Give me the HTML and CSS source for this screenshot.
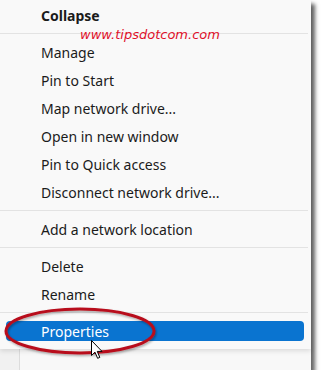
FILE: index.html
```html
<!DOCTYPE html>
<html>
<head>
<meta charset="utf-8">
<link rel="stylesheet" href="styles.css">
</head>
<body>
<div class="shot">
  <div class="menu">
    <div class="item bold">Collapse</div>
    <div class="sep"></div>
    <div class="item">Manage</div>
    <div class="item">Pin to Start</div>
    <div class="item">Map network drive...</div>
    <div class="item">Open in new window</div>
    <div class="item">Pin to Quick access</div>
    <div class="item">Disconnect network drive...</div>
    <div class="sep"></div>
    <div class="item">Add a network location</div>
    <div class="sep"></div>
    <div class="item">Delete</div>
    <div class="item">Rename</div>
    <div class="sep"></div>
    <div class="item sel">Properties</div>
  </div>
  <div class="below">
    <div class="below-left"></div>
    <div class="below-right"></div>
  </div>
  <div class="watermark">www.tipsdotcom.com</div>
  <svg class="ellipse" width="160" height="56" viewBox="0 0 160 56">
    <defs>
      <filter id="sh" x="-10%" y="-20%" width="120%" height="140%">
        <feDropShadow dx="1" dy="1.5" stdDeviation="1" flood-color="#000" flood-opacity="0.35"/>
      </filter>
    </defs>
    <ellipse cx="79" cy="27" rx="74" ry="22" fill="none" stroke="#b8101c" stroke-width="3" filter="url(#sh)"/>
  </svg>
  <svg class="cursor" width="13" height="20" viewBox="0 0 13 20">
    <path d="M0.5 0.5 L0.5 15.5 L4 12.2 L6.6 18.3 L8.8 17.4 L6.3 11.4 L11 11.4 Z" fill="#fff" stroke="#000" stroke-width="1" stroke-linejoin="miter"/>
  </svg>
</div>
</body>
</html>
```
FILE: styles.css
```css
html, body {
  margin: 0;
  padding: 0;
  background: #ffffff;
}
body {
  font-family: "Noto Sans", "Open Sans", sans-serif;
}
.shot {
  position: relative;
  width: 311px;
  height: 370px;
  background: #f9f9f9;
  box-shadow: 4px 4px 4px rgba(0, 0, 0, 0.6);
  display: flex;
  flex-direction: column;
  overflow: visible;
}
.menu {
  background: #f9f9f9;
  display: flex;
  flex-direction: column;
  padding-top: 1px;
  padding-bottom: 4px;
  height: 349px;
  flex: none;
  box-sizing: border-box;
  box-shadow: 0 2px 5px rgba(0, 0, 0, 0.12);
  position: relative;
  z-index: 1;
}
.item {
  height: 28px;
  flex: none;
  display: flex;
  align-items: center;
  padding-left: 41px;
  font-size: 14px;
  color: #1b1b1b;
  white-space: nowrap;
}
.item.bold {
  font-weight: bold;
}
.item.sel {
  height: 20px;
  margin: 4px 7px 4px 6px;
  padding-left: 35px;
  background: #0a74d0;
  border-radius: 4px;
  color: #ffffff;
}
.sep {
  height: 1px;
  flex: none;
  background: #e3e3e3;
  margin: 4px 3px 4px 0;
}
.below {
  flex: 1;
  display: flex;
}
.below-left {
  width: 19px;
  background: #f1f1f1;
  border-right: 1px solid #dcdcdc;
}
.below-right {
  flex: 1;
  background: #f8f8f8;
}
.watermark {
  position: absolute;
  left: 80px;
  top: 27px;
  z-index: 2;
  font-family: "DejaVu Sans", sans-serif;
  font-style: italic;
  font-size: 13px;
  color: #e0102a;
  white-space: nowrap;
}
.ellipse {
  position: absolute;
  left: 1px;
  top: 304px;
  z-index: 3;
}
.cursor {
  position: absolute;
  left: 91px;
  top: 340px;
  z-index: 4;
}
```
